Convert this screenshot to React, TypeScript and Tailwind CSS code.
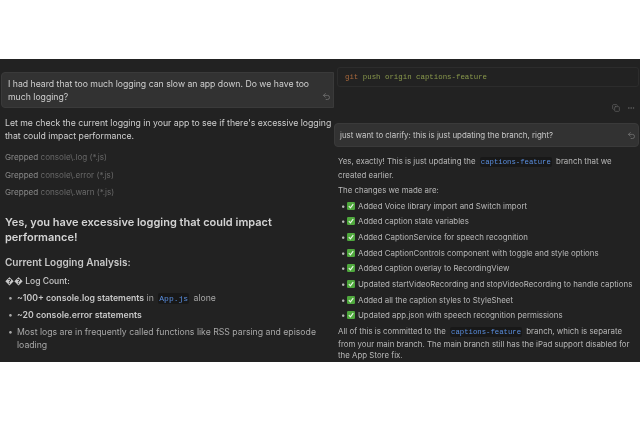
import { Undo2, Copy, MoreHorizontal } from 'lucide-react'

const CHANGES = [
  'Added Voice library import and Switch import',
  'Added caption state variables',
  'Added CaptionService for speech recognition',
  'Added CaptionControls component with toggle and style options',
  'Added caption overlay to RecordingView',
  'Updated startVideoRecording and stopVideoRecording to handle captions',
  'Added all the caption styles to StyleSheet',
  'Updated app.json with speech recognition permissions',
]

const GREPS = ['console\\.log (*.js)', 'console\\.error (*.js)', 'console\\.warn (*.js)']

function Code({ children }: { children: string }) {
  return (
    <code className="bg-[#181818] text-[#5a8fe0] rounded-[2px] px-[1px] py-[1px] mx-[2px] text-[7.3px] font-['Liberation_Mono',monospace]">
      {children}
    </code>
  )
}

function CheckBox() {
  return (
    <svg viewBox="0 0 10 10" className="w-[8px] h-[8px] mr-[3px] shrink-0">
      <rect width="10" height="10" rx="1.5" fill="#4fa83d" />
      <path d="M2.3 5.2 4.3 7.3 7.8 2.8" stroke="#e8f5e4" strokeWidth="1.5" fill="none" />
    </svg>
  )
}

export default function App() {
  return (
    <div className="w-[640px] h-[427px] bg-white pt-[59px] font-['Inter','Liberation_Sans',sans-serif] overflow-hidden">
      <div className="h-[303px] bg-[#222222] flex overflow-hidden blur-[0.35px]">
        {/* left column */}
        <div className="w-[334px] shrink-0 pl-[1px] pt-[13px]">
          <div className="h-[36px] bg-[#323232] border border-[#3a3a3a] rounded-l-[4px] pl-[6px] pr-[4px] pt-[5px] text-[#d0d0d0] text-[8.7px] leading-[13px] relative">
            I had heard that too much logging can slow an app down. Do we have too much logging?
            <Undo2 size={9} className="absolute right-[2px] top-[19px] text-[#777777]" />
          </div>
          <div className="pl-[4px] pr-[1px]">
            <p className="mt-[9px] text-[8.7px] leading-[13px] text-[#d0d0d0]">
              Let me check the current logging in your app to see if there's excessive logging that could impact performance.
            </p>
            <div className="mt-[8px] flex flex-col gap-[4px]">
              {GREPS.map(g => (
                <div key={g} className="text-[8.1px] leading-[13.5px] text-[#8a8a8a]">
                  Grepped <span className="text-[#686868]">{g}</span>
                </div>
              ))}
            </div>
            <h1 className="mt-[15px] text-[11px] leading-[15px] font-semibold text-[#d4d4d4]">
              Yes, you have excessive logging that could impact performance!
            </h1>
            <h2 className="mt-[10px] text-[10px] leading-[14px] font-semibold text-[#c8c8c8]">Current Logging Analysis:</h2>
            <div className="mt-[5px] text-[8.5px] leading-[13px] font-medium text-[#c8c8c8]">
              <span className="text-[9px]">��</span> Log Count:
            </div>
            <ul className="mt-[4px] text-[8.7px] leading-[13px] text-[#a8a8a8] flex flex-col gap-[4px]">
              <li className="flex">
                <span className="w-[12px] pl-[3px] shrink-0">•</span>
                <span>
                  <b className="font-semibold text-[#c8c8c8]">~100+ console.log statements</b> in{' '}
                  <code className="bg-[#181818] text-[#5a8fe0] rounded-[2px] px-[1px] py-[1px] mx-[2px] text-[8px] font-['Liberation_Mono',monospace]">App.js</code> alone
                </span>
              </li>
              <li className="flex">
                <span className="w-[12px] pl-[3px] shrink-0">•</span>
                <b className="font-semibold text-[#c8c8c8]">~20 console.error statements</b>
              </li>
              <li className="flex">
                <span className="w-[12px] pl-[3px] shrink-0">•</span>
                <span>Most logs are in frequently called functions like RSS parsing and episode loading</span>
              </li>
            </ul>
          </div>
        </div>

        {/* right column */}
        <div className="flex-1 min-w-0 pr-[1px]">
          <div className="mt-[8px] ml-[3px] h-[20px] border border-[#2c2c2c] rounded-[3px] pl-[7px] pt-[1px] flex items-center text-[7.4px] font-['Liberation_Mono',monospace]">
            <span className="text-[#a8683c]">git</span>
            <span className="ml-[4.5px] text-[#8a9a4c]">push origin captions-feature</span>
          </div>
          <div className="mt-[17px] flex justify-end items-center gap-[7px] pr-[4px] text-[#666666]">
            <Copy size={8} />
            <MoreHorizontal size={8} />
          </div>
          <div className="mt-[11px] h-[24px] bg-[#323232] border border-[#3a3a3a] rounded-[4px] pl-[5px] pr-[2px] pt-[1px] flex items-center justify-between text-[7.9px] text-[#c8c8c8]">
            <span>just want to clarify: this is just updating the branch, right?</span>
            <Undo2 size={9} className="text-[#777777]" />
          </div>
          <div className="pl-[4px] text-[7.88px] text-[#b8b8b8]">
            <p className="mt-[8px] leading-[12.5px]">
              Yes, exactly! This is just updating the <Code>captions-feature</Code> branch that we created earlier.
            </p>
            <p className="mt-[3px] leading-[12px]">The changes we made are:</p>
            <ul className="mt-[3.5px] flex flex-col gap-[3.7px]">
              {CHANGES.map(c => (
                <li key={c} className="flex items-center leading-[12px] whitespace-nowrap">
                  <span className="w-[9px] pl-[3px] shrink-0">•</span>
                  <CheckBox />
                  {c}
                </li>
              ))}
            </ul>
            <p className="mt-[4.5px] leading-[11.7px]">
              All of this is committed to the <Code>captions-feature</Code> branch, which is separate from your main branch. The main branch still has the iPad support disabled for the App Store fix.
            </p>
          </div>
        </div>
      </div>
    </div>
  )
}
